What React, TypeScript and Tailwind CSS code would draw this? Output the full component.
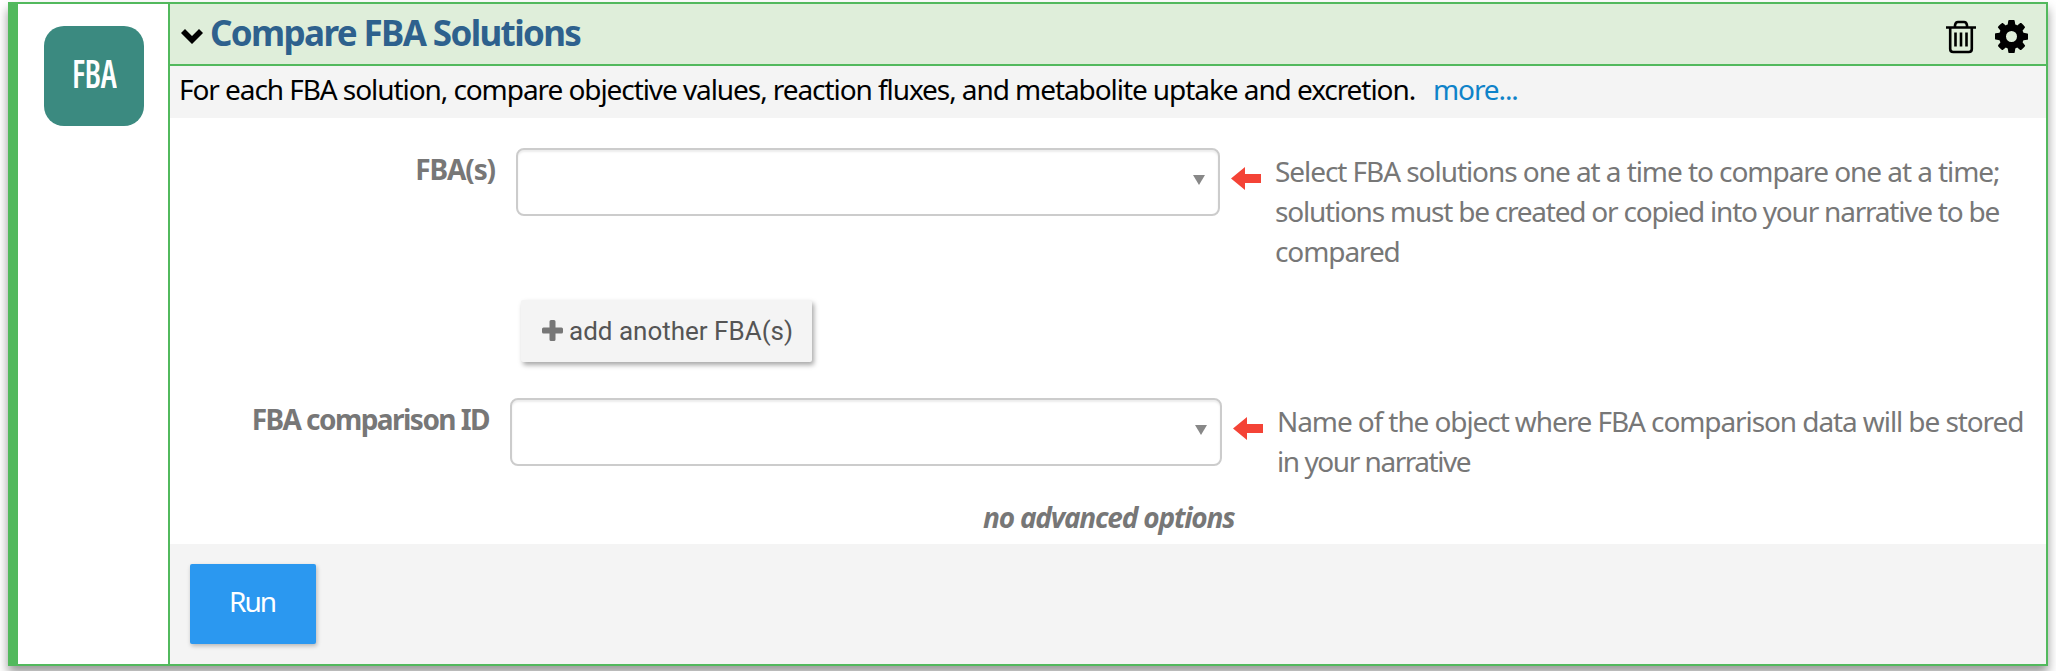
import type { ReactNode } from "react";

function Arrow() {
  return (
    <svg className="mt-[19px] h-[23px] w-[30px] shrink-0" viewBox="0 0 30 23" fill="#f44336">
      <path d="M0 11.5 14 0v7h16v9H14v7z" />
    </svg>
  );
}

function Select({ className }: { className: string }) {
  return (
    <div
      className={
        "flex h-[68px] shrink-0 items-start justify-end rounded-[8px] border-2 border-[#ccc] bg-white pt-[25px] pr-[13px] shadow-[inset_0_2px_2px_rgba(0,0,0,0.075)] " +
        className
      }
    >
      <svg className="h-[10px] w-[12px]" viewBox="0 0 12 10" fill="#888">
        <path d="M0 0h12L6 10z" />
      </svg>
    </div>
  );
}

function Help({ children }: { children: ReactNode }) {
  return <div className="ml-[14px] pt-[3px] text-[28px] leading-[40px] whitespace-nowrap text-[#777]">{children}</div>;
}

export default function App() {
  return (
    <div className="h-[671px] overflow-hidden bg-white pt-[2px] pl-[8px] font-['Noto_Sans',sans-serif]">
      <div className="flex h-[664px] w-[2040px] border-2 border-l-[10px] border-[#52b95d] shadow-[0_7px_10px_rgba(0,0,0,0.4)]">
        <div className="flex w-[150px] shrink-0 items-start pt-[22px] pl-[26px]">
          <div className="flex h-[100px] w-[100px] items-center justify-center rounded-[20px] bg-[#3b8a80] pb-[8px] font-['Open_Sans',sans-serif] text-[39px] leading-none font-semibold text-white [font-stretch:75%]">
            <span className="scale-x-[0.85] tracking-[-0.5px]">FBA</span>
          </div>
        </div>
        <div className="flex min-w-0 flex-1 flex-col border-l-2 border-[#52b95d]">
          <div className="flex h-[62px] shrink-0 items-center border-b-2 border-[#52b95d] bg-[#dfeeda] pl-[11px]">
            <svg className="mt-[5px] h-[17px] w-[22px]" viewBox="0 0 22 17" fill="#000">
              <path d="M0 5 4 1l7 7 7-7 4 4L11 16z" />
            </svg>
            <h1 className="-mt-[2px] ml-[7px] text-[35px] leading-[50px] font-bold tracking-[-1.63px] whitespace-nowrap text-[#2e618d]">
              Compare FBA Solutions
            </h1>
            <div className="ml-auto flex items-center pr-[18px]">
              <svg className="mt-[5px] h-[34px] w-[30px]" viewBox="0 0 30 34" fill="none" stroke="#000" strokeWidth="2.6">
                <path d="M0 7.500h30M9 7V5.200Q9.500 2 12 2h6q2.500 0 3 3.200V7" />
                <path d="M4.200 7.500V29q0 3 3 3h15.600q3 0 3-3V7.500M9.500 12.500v14M15 12.500v14M20.500 12.500v14" />
              </svg>
              <svg className="mt-[5px] ml-[19px] h-[33px] w-[33px]" viewBox="128 128 1536 1536" fill="#000">
                <path d="M1152 896q0-106-75-181t-181-75-181 75-75 181 75 181 181 75 181-75 75-181zm512-109v222q0 12-8 23t-20 13l-185 28q-19 54-39 91 35 50 107 138 10 12 10 25t-9 23q-27 37-99 108t-94 71q-12 0-26-9l-138-108q-44 23-91 38-16 136-29 186-7 28-36 28h-222q-14 0-24.500-8.500t-11.500-21.500l-28-184q-49-16-90-37l-141 107q-10 9-25 9-14 0-25-11-126-114-165-168-7-10-7-23 0-12 8-23 15-21 51-66.500t54-70.500q-27-50-41-99l-183-27q-13-2-21-12.500t-8-23.500v-222q0-12 8-23t19-13l186-28q14-46 39-92-40-57-107-138-10-12-10-24 0-10 9-23 26-36 98.500-107.500t94.500-71.500q13 0 26 10l138 107q44-23 91-38 16-136 29-186 7-28 36-28h222q14 0 24.500 8.500t11.500 21.500l28 184q49 16 90 37l142-107q9-9 24-9 13 0 25 10 129 119 165 170 7 8 7 22 0 12-8 23-15 21-51 66.500t-54 70.500q26 50 41 98l183 28q13 2 21 12.500t8 23.500z" />
              </svg>
            </div>
          </div>
          <div className="flex h-[52px] shrink-0 bg-[#f4f4f4] pt-[3px] pl-[9px] text-[28px] leading-[40px] whitespace-nowrap text-black">
            <span className="w-[1254px] tracking-[-1.07px]">
              For each FBA solution, compare objective values, reaction fluxes, and metabolite uptake and excretion.
            </span>
            <span className="tracking-[-1.1px] text-[#0f83c9]">more...</span>
          </div>
          <div className="flex h-[426px] shrink-0 flex-col bg-white pt-[30px]">
            <div className="flex h-[152px]">
              <div className="w-[325px] pt-[1px] text-right text-[28px] leading-[40px] font-bold tracking-[-1.1px] text-[#777]">FBA(s)</div>
              <Select className="ml-[21px] w-[704px]" />
              <div className="ml-[11px]"><Arrow /></div>
              <Help>
                <div className="tracking-[-1.06px]">Select FBA solutions one at a time to compare one at a time;</div>
                <div className="tracking-[-1.22px]">solutions must be created or copied into your narrative to be</div>
                <div className="tracking-[-1.1px]">compared</div>
              </Help>
            </div>
            <button className="ml-[351px] flex h-[62px] w-[291px] shrink-0 items-center rounded-[2px] bg-[#f4f4f4] pl-[21px] font-['Roboto',sans-serif] text-[26px] whitespace-nowrap text-[#555] shadow-[2px_3px_5px_rgba(0,0,0,0.35)]">
              <svg className="mt-[-2px] mr-[6px] h-[21px] w-[21px]" viewBox="0 0 21 21" fill="#777">
                <path d="M9 0h3q1.500 0 1.500 1.500v6h6q1.500 0 1.500 1.500v3q0 1.500-1.500 1.500h-6v6q0 1.500-1.500 1.500H9q-1.500 0-1.500-1.500v-6h-6Q0 13.500 0 12V9q0-1.500 1.500-1.500h6v-6Q7.500 0 9 0z" />
              </svg>
              add another FBA(s)
            </button>
            <div className="mt-[36px] flex h-[96px]">
              <div className="w-[319px] pt-[1px] text-right text-[28px] leading-[40px] font-bold tracking-[-1.55px] whitespace-nowrap text-[#777]">FBA comparison ID</div>
              <Select className="ml-[21px] w-[712px]" />
              <div className="ml-[11px]"><Arrow /></div>
              <Help>
                <div className="tracking-[-1.09px]">Name of the object where FBA comparison data will be stored</div>
                <div className="tracking-[-1.45px]">in your narrative</div>
              </Help>
            </div>
            <div className="pt-[3px] pl-[813px] text-[28px] leading-[40px] font-bold tracking-[-1.2px] text-[#777] italic">no advanced options</div>
          </div>
          <div className="flex-1 bg-[#f4f4f4] pt-[20px] pl-[20px]">
            <button className="flex h-[80px] w-[126px] items-center justify-center rounded-[2px] bg-[#2b98f0] pr-[2px] pb-[6px] text-[28px] tracking-[-2px] text-white shadow-[1px_2px_4px_rgba(0,0,0,0.25)]">
              Run
            </button>
          </div>
        </div>
      </div>
    </div>
  );
}
